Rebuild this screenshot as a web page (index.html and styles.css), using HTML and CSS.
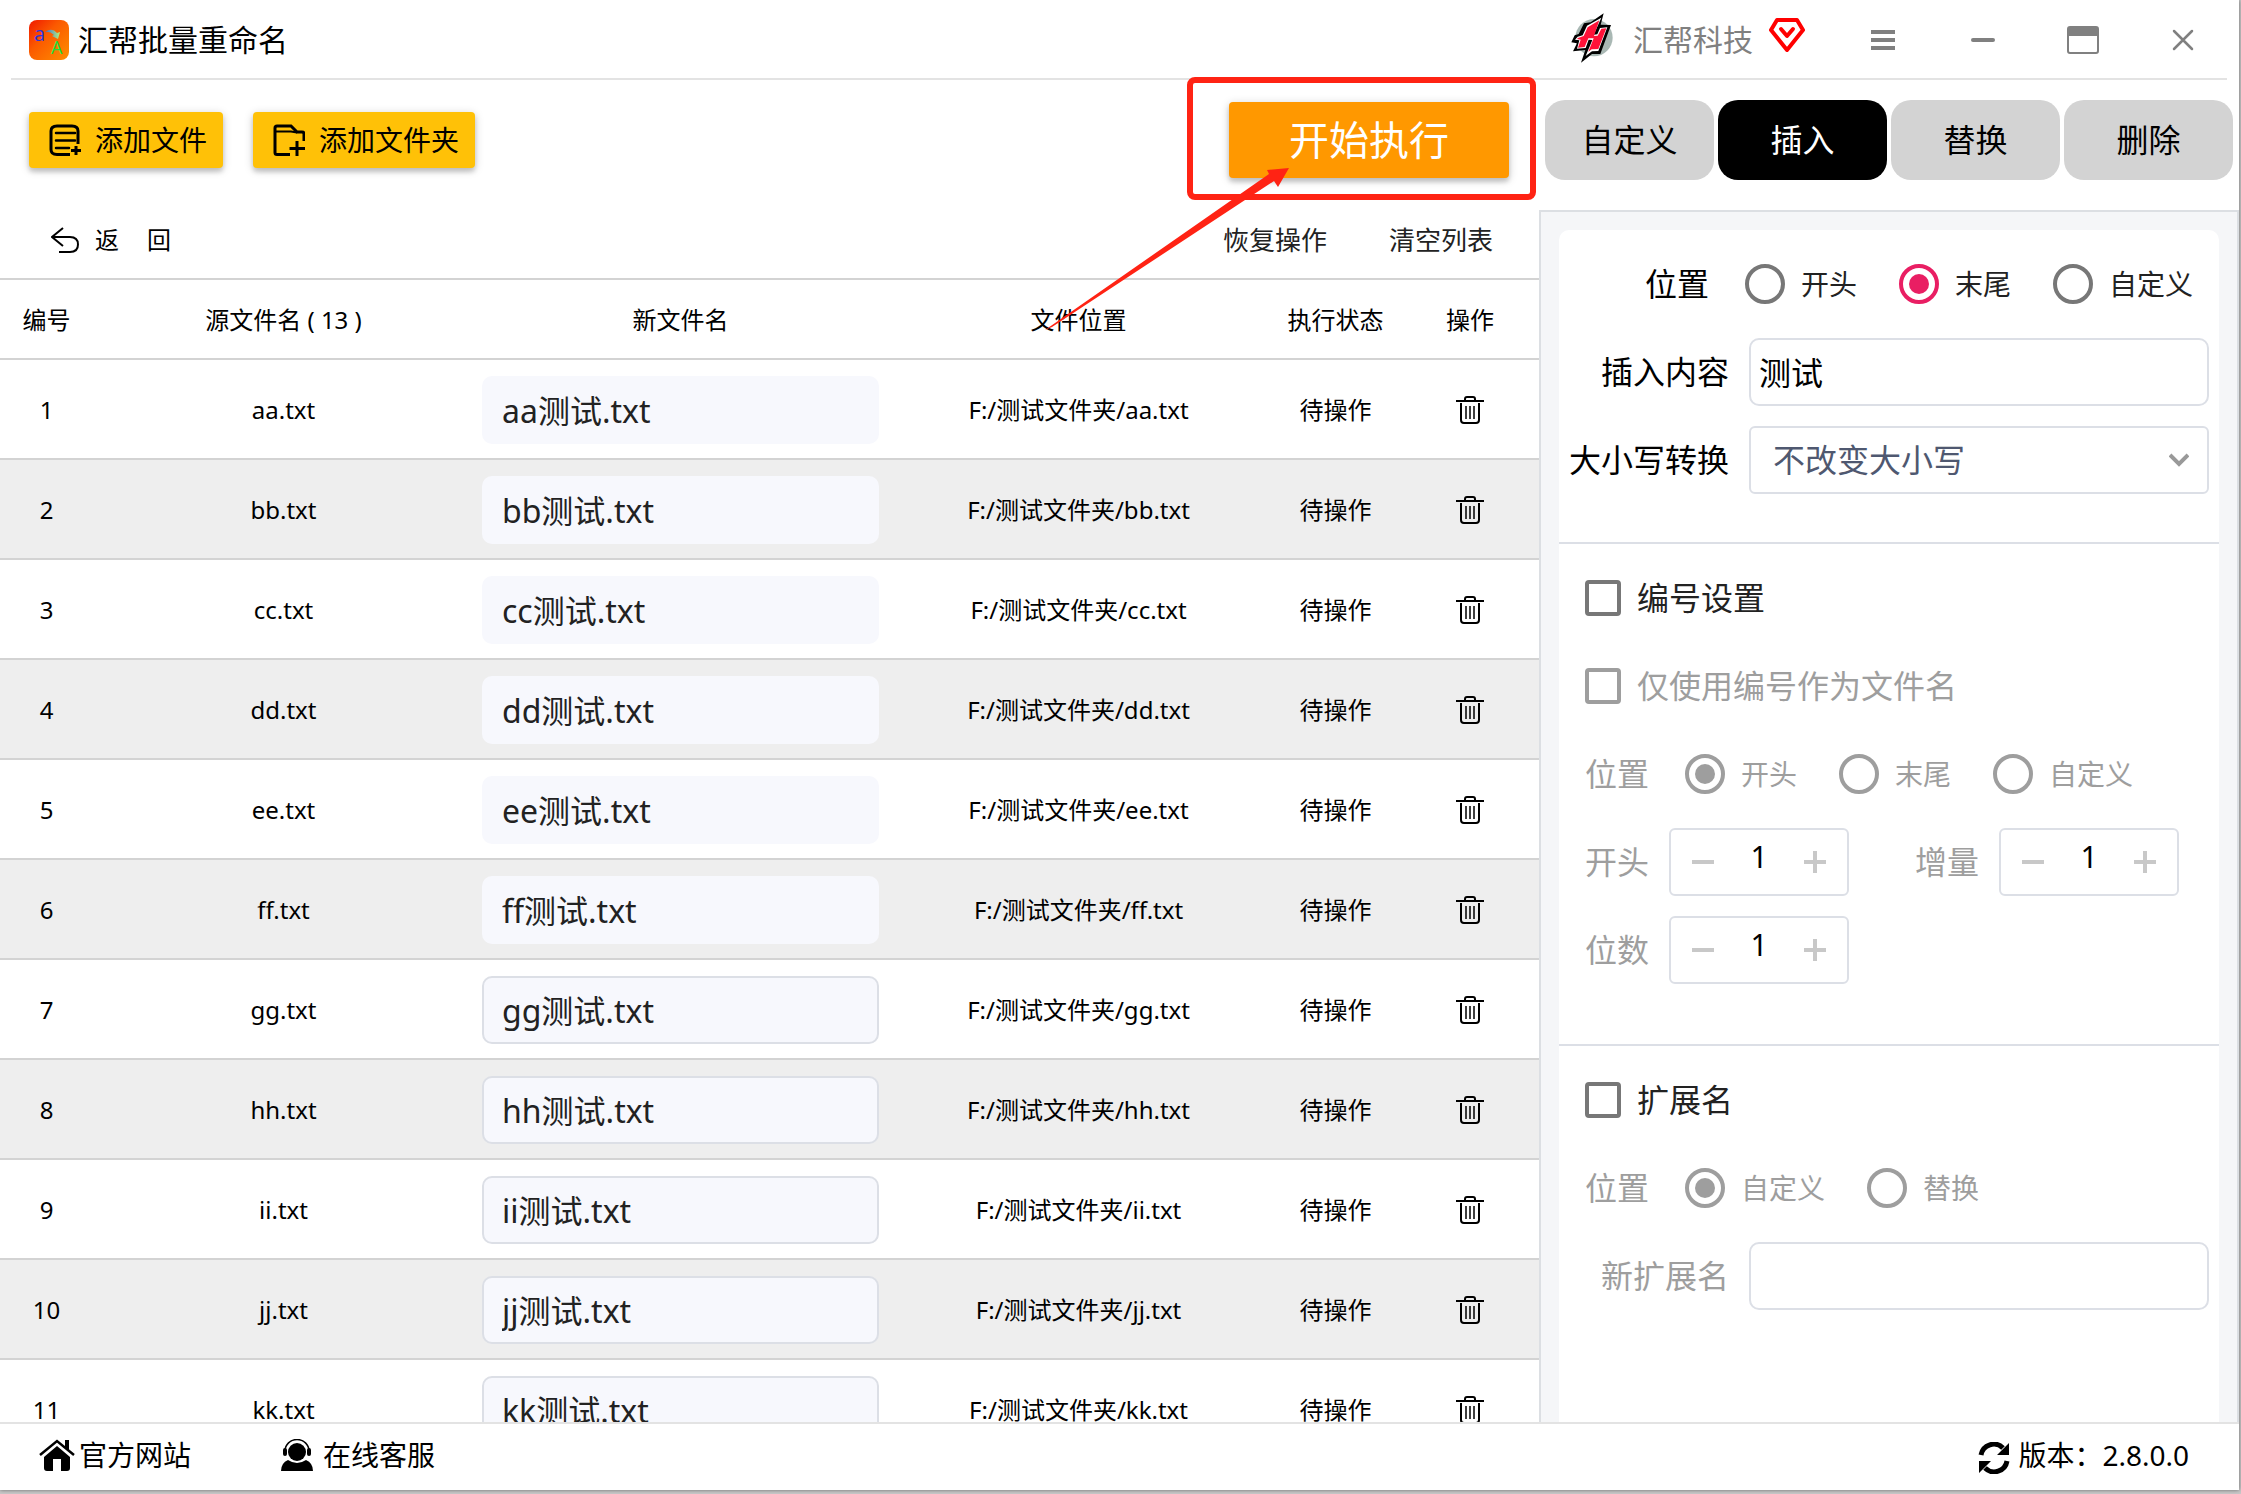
FILE: index.html
```html
<!DOCTYPE html>
<html lang="zh-CN">
<head>
<meta charset="utf-8">
<title>汇帮批量重命名</title>
<link rel="stylesheet" href="styles.css">
</head>
<body>
<svg class="defs" aria-hidden="true">
  <symbol id="trash" viewBox="0 0 28 28">
    <g fill="none" stroke="currentColor" stroke-width="2">
      <path d="M0 5h28"/><path d="M9 5V3q0-2 2-2h6q2 0 2 2v2"/>
      <path d="M5 7v17q0 3 3 3h12q3 0 3-3V7"/>
    </g>
    <path d="M10 10v13M14 10v13M18 10v13" stroke="currentColor" stroke-width="1.5"/>
  </symbol>
</svg>
<div class="app">
  <header class="titlebar">
    <svg class="app-logo" viewBox="0 0 40 40" aria-hidden="true">
      <defs>
        <linearGradient id="lg" x1="0" y1="0" x2="1" y2="1"><stop offset="0" stop-color="#f01800"/><stop offset=".4" stop-color="#fb5a00"/><stop offset="1" stop-color="#ff8f00"/></linearGradient>
        <linearGradient id="ar" x1="0" y1="0" x2="1" y2="0"><stop offset="0" stop-color="#3a6fd8"/><stop offset="1" stop-color="#b6f07a"/></linearGradient>
      </defs>
      <rect width="40" height="40" rx="8" fill="url(#lg)"/>
      <text x="5" y="21" font-size="20" fill="#2a35e0">a</text>
      <text x="22" y="34" font-size="18" fill="#19e03c">A</text>
      <path d="M16 12q7-5 12 1l3-1-2 7-6-3 2-1q-4-4-9-3z" fill="url(#ar)"/>
    </svg>
    <h1 class="app-name">汇帮批量重命名</h1>
    <svg class="brand-logo" viewBox="34 36 126 150" aria-hidden="true">
      <circle cx="103" cy="110" r="56" fill="#a9b8b4"/>
      <path d="M132 37l-9 34 31 1-32 87H97l-33 26 13-38-37 4 12-24-17-3 10-21 12-4 16-32 20-3z" fill="#000"/>
      <path d="M125 50L82 74 69 103l-15 4-8 9 13 2-7 25 26-2 9-25 11 1-20 48 19-14 19-1 27-71-22 2-8 19-11 1z" fill="#fff"/>
      <path d="M119 58L84 79l-12 26-17 6-3 3 11 2-8 24 20-2 11-26h16l-16 40 10-7 20-1 24-62-15 1-11 21-11 1z" fill="#ff1238"/>
    </svg>
    <span class="brand">汇帮科技</span>
    <svg class="gem" viewBox="0 0 36 36" aria-hidden="true"><path d="M8 3h20l6 10-16 20L2 13z" fill="none" stroke="#f00" stroke-width="4" stroke-linejoin="round"/><path d="M12 12l6 7 6-7" fill="none" stroke="#f00" stroke-width="4" stroke-linecap="round" stroke-linejoin="round"/></svg>
    <nav class="window-buttons">
      <button class="win-btn" aria-label="菜单"><svg viewBox="0 0 32 32"><path d="M4 8h24M4 16h24M4 24h24" stroke="currentColor" stroke-width="4"/></svg></button>
      <button class="win-btn" aria-label="最小化"><svg viewBox="0 0 32 32"><path d="M6 16h20" stroke="currentColor" stroke-width="4" stroke-linecap="round"/></svg></button>
      <button class="win-btn" aria-label="最大化"><svg viewBox="0 0 32 32"><rect x="1" y="3" width="30" height="26" rx="2" fill="none" stroke="currentColor" stroke-width="2"/><path d="M1 3h30v9H1z" fill="currentColor"/></svg></button>
      <button class="win-btn" aria-label="关闭"><svg viewBox="0 0 32 32"><path d="M7 7l18 18M25 7L7 25" stroke="currentColor" stroke-width="2.5" stroke-linecap="round"/></svg></button>
    </nav>
  </header>

  <main class="main">
    <section class="files">
      <div class="toolbar">
        <button class="add-btn">
          <svg viewBox="0 0 32 32" fill="none" stroke="currentColor" stroke-width="3"><path d="M21 30.500H8q-6 0-6-5V7q0-5 6-5h15q6 0 6 5v13"/><path d="M7 9h19M7 16.500h19M7 24h13" stroke-linecap="round" stroke-width="2.500"/><path d="M27 22v9M22 26.500h10"/></svg>
          添加文件
        </button>
        <button class="add-btn">
          <svg viewBox="0 0 32 32" fill="none" stroke="currentColor" stroke-width="3"><path d="M17 30.500H4q-2 0-2-2V4q0-2 2-2h14l6 6h5q2 0 2 2v7"/><path d="M2 7.500h16l6 1" stroke-width="2"/><path d="M24 17v15M16.500 24.500H32"/></svg>
          添加文件夹
        </button>
        <div class="run">
          <button class="run-btn">开始执行</button>
          <svg class="run-mark" viewBox="0 0 520 270" aria-hidden="true">
            <rect x="161" y="8" width="343" height="117" rx="5" fill="none" stroke="#ff2314" stroke-width="6"/>
            <path d="M16 258L240 102l-2-4 22-2-11 19-4-6L23 255z" fill="#ff2314"/>
          </svg>
        </div>
      </div>
      <div class="subbar">
        <button class="link-btn back-btn"><svg viewBox="0 0 28 26" fill="none" stroke="currentColor" stroke-width="2"><path d="M12 1L1 10l11 9M1 10h18q8 0 8 7.500T19 25H8"/></svg><span>返</span><span class="back-end">回</span></button>
        <button class="link-btn">恢复操作</button>
        <button class="link-btn">清空列表</button>
      </div>
      <div class="list">
        <table class="grid">
          <colgroup><col class="c-no"><col class="c-src"><col class="c-new"><col><col class="c-state"><col class="c-op"></colgroup>
          <thead><tr><th>编号</th><th>源文件名 ( 13 )</th><th>新文件名</th><th>文件位置</th><th>执行状态</th><th>操作</th></tr></thead>
          <tbody>
            <tr><td>1</td><td>aa.txt</td><td><input class="name" aria-label="新文件名" value="aa测试.txt"></td><td>F:/测试文件夹/aa.txt</td><td>待操作</td><td><button class="del" aria-label="删除"><svg><use href="#trash"/></svg></button></td></tr>
            <tr><td>2</td><td>bb.txt</td><td><input class="name" aria-label="新文件名" value="bb测试.txt"></td><td>F:/测试文件夹/bb.txt</td><td>待操作</td><td><button class="del" aria-label="删除"><svg><use href="#trash"/></svg></button></td></tr>
            <tr><td>3</td><td>cc.txt</td><td><input class="name" aria-label="新文件名" value="cc测试.txt"></td><td>F:/测试文件夹/cc.txt</td><td>待操作</td><td><button class="del" aria-label="删除"><svg><use href="#trash"/></svg></button></td></tr>
            <tr><td>4</td><td>dd.txt</td><td><input class="name" aria-label="新文件名" value="dd测试.txt"></td><td>F:/测试文件夹/dd.txt</td><td>待操作</td><td><button class="del" aria-label="删除"><svg><use href="#trash"/></svg></button></td></tr>
            <tr><td>5</td><td>ee.txt</td><td><input class="name" aria-label="新文件名" value="ee测试.txt"></td><td>F:/测试文件夹/ee.txt</td><td>待操作</td><td><button class="del" aria-label="删除"><svg><use href="#trash"/></svg></button></td></tr>
            <tr><td>6</td><td>ff.txt</td><td><input class="name" aria-label="新文件名" value="ff测试.txt"></td><td>F:/测试文件夹/ff.txt</td><td>待操作</td><td><button class="del" aria-label="删除"><svg><use href="#trash"/></svg></button></td></tr>
            <tr><td>7</td><td>gg.txt</td><td><input class="name outlined" aria-label="新文件名" value="gg测试.txt"></td><td>F:/测试文件夹/gg.txt</td><td>待操作</td><td><button class="del" aria-label="删除"><svg><use href="#trash"/></svg></button></td></tr>
            <tr><td>8</td><td>hh.txt</td><td><input class="name outlined" aria-label="新文件名" value="hh测试.txt"></td><td>F:/测试文件夹/hh.txt</td><td>待操作</td><td><button class="del" aria-label="删除"><svg><use href="#trash"/></svg></button></td></tr>
            <tr><td>9</td><td>ii.txt</td><td><input class="name outlined" aria-label="新文件名" value="ii测试.txt"></td><td>F:/测试文件夹/ii.txt</td><td>待操作</td><td><button class="del" aria-label="删除"><svg><use href="#trash"/></svg></button></td></tr>
            <tr><td>10</td><td>jj.txt</td><td><input class="name outlined" aria-label="新文件名" value="jj测试.txt"></td><td>F:/测试文件夹/jj.txt</td><td>待操作</td><td><button class="del" aria-label="删除"><svg><use href="#trash"/></svg></button></td></tr>
            <tr><td>11</td><td>kk.txt</td><td><input class="name outlined" aria-label="新文件名" value="kk测试.txt"></td><td>F:/测试文件夹/kk.txt</td><td>待操作</td><td><button class="del" aria-label="删除"><svg><use href="#trash"/></svg></button></td></tr>
          </tbody>
        </table>
      </div>
    </section>

    <aside class="side">
      <div class="tabs">
        <button class="tab">自定义</button>
        <button class="tab active">插入</button>
        <button class="tab">替换</button>
        <button class="tab">删除</button>
      </div>
      <div class="panel">
        <form class="card">
          <div class="group group-insert">
            <div class="row row-end row-radios">
              <span class="caption">位置</span>
              <div class="radios">
                <label class="radio"><input type="radio" name="pos">开头</label>
                <label class="radio"><input type="radio" name="pos" checked>末尾</label>
                <label class="radio"><input type="radio" name="pos">自定义</label>
              </div>
            </div>
            <div class="row row-end">
              <label for="content">插入内容</label>
              <input class="field" id="content" type="text" value="测试">
            </div>
            <div class="row row-end">
              <label for="case">大小写转换</label>
              <div class="select-box">
                <select class="field select" id="case"><option>不改变大小写</option></select>
                <svg class="chevron" viewBox="0 0 20 14" aria-hidden="true"><path d="M1 2l9 9 9-9" fill="none" stroke="#999" stroke-width="4"/></svg>
              </div>
            </div>
          </div>
          <div class="group group-number">
            <div class="row"><label class="check"><input type="checkbox">编号设置</label></div>
            <div class="row off"><label class="check"><input type="checkbox" disabled>仅使用编号作为文件名</label></div>
            <div class="row row-radios off">
              <span class="caption">位置</span>
              <div class="radios">
                <label class="radio"><input type="radio" name="npos" checked disabled>开头</label>
                <label class="radio"><input type="radio" name="npos" disabled>末尾</label>
                <label class="radio"><input type="radio" name="npos" disabled>自定义</label>
              </div>
            </div>
            <div class="row off">
              <label for="start">开头</label>
              <div class="stepper"><button type="button" class="minus" aria-label="减少" disabled></button><input id="start" type="text" inputmode="numeric" value="1"><button type="button" class="plus" aria-label="增加" disabled></button></div>
              <label class="second" for="step">增量</label>
              <div class="stepper"><button type="button" class="minus" aria-label="减少" disabled></button><input id="step" type="text" inputmode="numeric" value="1"><button type="button" class="plus" aria-label="增加" disabled></button></div>
            </div>
            <div class="row off">
              <label for="digits">位数</label>
              <div class="stepper"><button type="button" class="minus" aria-label="减少" disabled></button><input id="digits" type="text" inputmode="numeric" value="1"><button type="button" class="plus" aria-label="增加" disabled></button></div>
            </div>
          </div>
          <div class="group group-ext">
            <div class="row"><label class="check"><input type="checkbox">扩展名</label></div>
            <div class="row row-radios off">
              <span class="caption">位置</span>
              <div class="radios">
                <label class="radio"><input type="radio" name="epos" checked disabled>自定义</label>
                <label class="radio"><input type="radio" name="epos" disabled>替换</label>
              </div>
            </div>
            <div class="row row-end off">
              <label for="ext">新扩展名</label>
              <input class="field" id="ext" type="text" disabled>
            </div>
          </div>
        </form>
      </div>
    </aside>
  </main>

  <footer class="footer">
    <a class="foot-link" href="#site"><svg class="home" viewBox="0 0 36 32"><path d="M18 7L5 18v11q0 3 3 3h6V20h8v12h6q3 0 3-3V18z"/><path d="M1 16L18 2l17 14" fill="none" stroke="currentColor" stroke-width="2.500"/><path d="M26 1h4v11l-4-3z"/></svg>官方网站</a>
    <a class="foot-link service" href="#service"><svg viewBox="0 0 32 32"><circle cx="16" cy="13" r="9"/><path d="M4 12a12 11.500 0 0 1 24 0" fill="none" stroke="currentColor" stroke-width="1.500"/><rect x="2" y="9" width="4" height="8" rx="2"/><rect x="26" y="9" width="4" height="8" rx="2"/><path d="M0 32q0-8 7-11 9 6 18 0 7 3 7 11z"/></svg>在线客服</a>
    <span class="version"><svg viewBox="0 0 32 32"><path d="M3 13A13 13 0 0 1 25 6M29 19A13 13 0 0 1 7 26" fill="none" stroke="currentColor" stroke-width="5"/><path d="M31 1v12H19zM1 31V19h12z"/></svg>版本：2.8.0.0</span>
  </footer>
</div>
</body>
</html>
```
FILE: styles.css
```css
* { box-sizing: border-box; }
html, body { height: 100%; }
body {
  margin: 0;
  padding: 0 2px 4px 0;
  background: #c9c9c9;
  color: #000;
  font-family: "Noto Sans", "Noto Sans CJK SC", sans-serif;
  font-size: 24px;
  line-height: 32px;
  overflow: hidden;
}
button, input, select { font: inherit; color: inherit; }
button { border: 0; padding: 0; background: none; cursor: pointer; }
svg { display: block; flex: none; }
.defs { position: absolute; width: 0; height: 0; }

.app {
  display: flex;
  flex-direction: column;
  height: 100%;
  background: #fff;
  box-shadow: 0 0 4px rgba(0, 0, 0, .5);
}

/* title bar */
.titlebar {
  display: flex;
  align-items: center;
  flex: none;
  height: 80px;
  margin: 0 12px 0 11px;
  padding: 2px 0 0 18px;
  border-bottom: 2px solid #e3e3e3;
}
.app-logo { width: 40px; height: 40px; font-family: "Open Sans", sans-serif; }
.app-name { flex: 1; margin: 0 0 0 9px; font-size: 30px; font-weight: 400; line-height: 40px; }
.brand-logo { width: 42px; height: 50px; margin-bottom: 4px; }
.brand { margin: 0 16px 0 20px; font-size: 30px; line-height: 40px; color: #808080; }
.gem { width: 36px; height: 36px; margin-bottom: 10px; }
.window-buttons { display: flex; gap: 36px; margin: 0 12px 0 46px; }
.win-btn { display: grid; place-items: center; width: 64px; height: 64px; color: #808080; }
.win-btn svg { width: 32px; height: 32px; }

/* body */
.main { display: flex; flex: 1; min-height: 0; }
.files { display: flex; flex: 1; flex-direction: column; min-width: 0; }
.toolbar {
  display: flex;
  align-items: center;
  gap: 30px;
  flex: none;
  height: 120px;
  padding: 0 30px 0 29px;
}
.add-btn {
  display: flex;
  align-items: center;
  gap: 14px;
  height: 56px;
  padding: 0 16px 0 20px;
  border-radius: 4px;
  background: #ffc107;
  box-shadow: 0 2px 10px rgba(0, 0, 0, .2), 0 4px 4px rgba(0, 0, 0, .14);
  font-size: 28px;
}
.add-btn svg { width: 32px; height: 32px; }
.run { position: relative; margin-left: auto; }
.run-btn {
  display: block;
  width: 280px;
  height: 76px;
  border-radius: 4px;
  background: #ff9800;
  box-shadow: 0 2px 10px rgba(0, 0, 0, .2), 0 4px 4px rgba(0, 0, 0, .14);
  color: #fff;
  font-size: 40px;
  line-height: 76px;
}
.run-mark {
  position: absolute;
  z-index: 2;
  left: -200px;
  top: -30px;
  width: 520px;
  height: 270px;
  pointer-events: none;
}
.subbar {
  display: flex;
  align-items: center;
  gap: 62px;
  flex: none;
  height: 80px;
  padding: 2px 46px 0 51px;
  border-bottom: 2px solid #d3d3d3;
}
.link-btn { font-size: 26px; color: #222; }
.back-btn { display: flex; align-items: center; margin-right: auto; font-size: 24px; color: #000; }
.back-btn svg { width: 28px; height: 26px; margin-right: 16px; }
.back-end { margin-left: 28px; }

.list { flex: 1; min-height: 0; overflow: hidden; }
.grid { width: 100%; table-layout: fixed; border-collapse: separate; border-spacing: 0; text-align: center; }
.c-no { width: 93px; }
.c-src { width: 381px; }
.c-new { width: 413px; }
.c-state { width: 131px; }
.c-op { width: 138px; }
.grid th, .grid td { padding: 2px 8px 0; border-bottom: 2px solid #d3d3d3; white-space: nowrap; }
.grid th { height: 80px; font-weight: 400; }
.grid td { height: 100px; }
.grid tbody tr:nth-child(even) { background: #eee; }
.name {
  display: block;
  width: 100%;
  height: 68px;
  padding: 0 18px 2px;
  border: 2px solid transparent;
  border-radius: 10px;
  background: #f7f8fd;
  color: #222;
  font-size: 32px;
}
.outlined { border-color: #dcdfe6; }
.del { display: block; margin: 0 auto; }
.del svg { width: 28px; height: 28px; }

/* side panel */
.side { display: flex; flex: none; flex-direction: column; width: 700px; }
.tabs { display: flex; gap: 4px; padding: 20px 6px 30px; }
.tab { flex: 1; height: 80px; border-radius: 20px; background: #d3d3d3; font-size: 32px; line-height: 80px; }
.active { background: #000; color: #fff; }
.panel {
  flex: 1;
  min-height: 0;
  padding: 18px 18px 0;
  border: solid #dcdfe3;
  border-width: 2px 2px 0;
  background: #f5f6f8;
}
.card { height: 100%; border-radius: 10px 10px 0 0; background: #fff; font-size: 32px; overflow: hidden; }
.group { display: flex; flex-direction: column; gap: 20px; padding: 20px 10px 0 26px; }
.group-insert { padding-bottom: 48px; border-bottom: 2px solid #dcdfe6; }
.group-number { padding-bottom: 60px; border-bottom: 2px solid #dcdfe6; }
.row { display: flex; align-items: center; gap: 20px; height: 68px; line-height: 40px; white-space: nowrap; }
.row-end { justify-content: flex-end; }
.row-radios { gap: 36px; }
.row-radios.row-end { padding-right: 16px; }
.off { color: #9e9e9e; }
.radios { display: flex; gap: 42px; font-size: 28px; }
.radio, .check { display: flex; align-items: center; gap: 16px; }
.radio { color: #222; }
.check { color: #222; }
.off .radio, .off .check { color: #9e9e9e; }
.radio input {
  display: grid;
  place-items: center;
  appearance: none;
  width: 40px;
  height: 40px;
  margin: 0;
  border: 4px solid #777;
  border-radius: 50%;
}
.radio input:checked { border-color: #e91e63; }
.radio input:checked::before { content: ""; width: 20px; height: 20px; border-radius: 50%; background: #e91e63; }
.radio input:disabled { border-color: #9e9e9e; }
.radio input:disabled::before { background: #9e9e9e; }
.check input { appearance: none; width: 36px; height: 36px; margin: 0; border: 4px solid #777; border-radius: 4px; }
.check input:disabled { border-color: #9e9e9e; }
.field {
  width: 460px;
  height: 68px;
  padding: 0 8px 2px;
  border: 2px solid #dcdfe6;
  border-radius: 10px;
  background: #fff;
}
.select-box { position: relative; }
.select { display: block; appearance: none; padding: 0 22px; border-radius: 6px; color: #4f5870; }
.chevron { position: absolute; right: 20px; top: 27px; width: 20px; height: 14px; pointer-events: none; }
.stepper {
  display: flex;
  width: 180px;
  height: 68px;
  padding: 0 12px;
  border: 2px solid #dcdfe6;
  border-radius: 6px;
}
.stepper input {
  flex: 1;
  min-width: 0;
  padding: 0 0 10px;
  border: 0;
  background: none;
  color: #000;
  font-size: 30px;
  text-align: center;
}
.stepper button { width: 40px; background: linear-gradient(#c8c8c8, #c8c8c8) center / 22px 4px no-repeat; }
.stepper .plus {
  background:
    linear-gradient(#c8c8c8, #c8c8c8) center / 22px 4px no-repeat,
    linear-gradient(#c8c8c8, #c8c8c8) center / 4px 22px no-repeat;
}
.second { margin-left: 46px; }

/* footer */
.footer {
  display: flex;
  align-items: center;
  flex: none;
  height: 68px;
  padding: 0 50px 4px 39px;
  border-top: 2px solid #e3e3e3;
  font-size: 28px;
}
.foot-link, .version { display: flex; align-items: center; color: #000; text-decoration: none; }
.foot-link svg, .version svg { width: 32px; height: 32px; margin-right: 8px; fill: currentColor; }
.foot-link .home { width: 36px; margin-right: 4px; }
.foot-link.service svg { margin-right: 10px; }
.service { margin-left: 90px; }
.version { margin-left: auto; }
.version svg { margin-top: 6px; }
```
